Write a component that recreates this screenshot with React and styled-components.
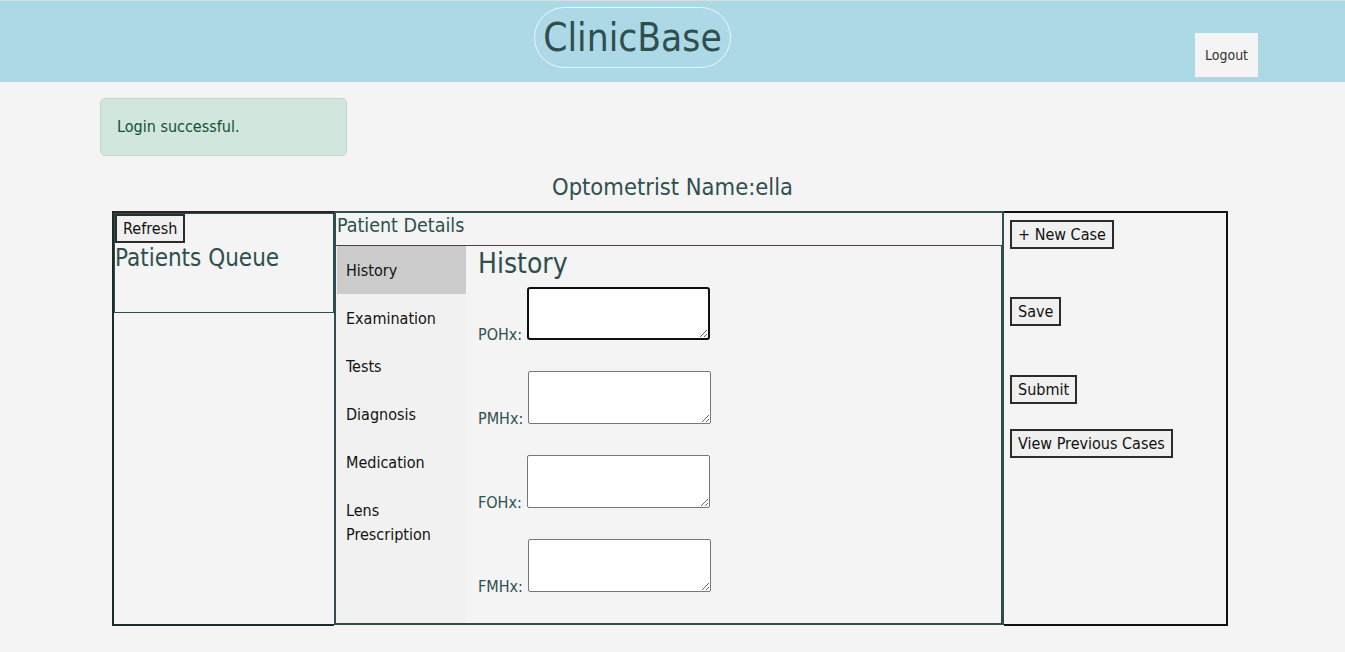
import React from 'react';
import styled, { createGlobalStyle } from 'styled-components';

const GlobalStyle = createGlobalStyle`
  body {
    margin: 0;
    background-color: #f4f4f4;
    font-family: "DejaVu Sans Condensed", "Liberation Sans", sans-serif;
    color: #2f4f4f;
  }
  * {
    box-sizing: border-box;
  }
`;

const Header = styled.header`
  display: grid;
  grid-template-columns: 1fr auto 1fr;
  height: 82px;
  padding-right: 80px;
  background-color: #add8e6;
  border-top: 1px solid #d2dfe3;
`;

const TitlePill = styled.h1`
  grid-column: 2;
  align-self: start;
  margin: 6px 0 0;
  padding: 0 8px;
  height: 61px;
  line-height: 60px;
  font-size: 38.5px;
  font-weight: normal;
  color: #2f4f4f;
  border: 1px solid rgba(255, 255, 255, 0.75);
  border-radius: 31px;
`;

const HeaderRight = styled.div`
  grid-column: 3;
  display: flex;
  justify-content: flex-end;
  align-items: flex-end;
  padding: 0 7px 5px 0;
`;

const LogoutButton = styled.button`
  width: 63px;
  height: 44px;
  border: none;
  background-color: #f4f4f4;
  color: #333;
  font-family: inherit;
  font-size: 14px;
  padding: 0;
`;

const Alert = styled.div`
  width: 247px;
  margin: 16px 0 0 100px;
  padding: 16px;
  line-height: 24px;
  font-size: 16px;
  color: #0f5132;
  background-color: #d1e7dd;
  border: 1px solid #badbcc;
  border-radius: 5px;
`;

const OptometristName = styled.h2`
  margin: 17px 0 10px;
  line-height: 28px;
  font-size: 23.5px;
  font-weight: normal;
  text-align: center;
  color: #2f4f4f;
`;

const Workspace = styled.div`
  display: flex;
  width: 1116px;
  height: 415px;
  margin-left: 112px;
`;

const QueueColumn = styled.div`
  width: 222px;
  border: 2px solid #1b2b2b;
  border-right: none;
`;

const QueueBox = styled.div`
  height: 100px;
  border: 1px solid #2f4f4f;
`;

const PlainButton = styled.button`
  display: block;
  margin: ${(p) => p.$top || 0}px 0 0;
  padding: 3px 6px;
  font-family: inherit;
  font-size: 16px;
  line-height: 19px;
  color: #111;
  background-color: #f0f0f0;
  border: 2px solid #2b2b2b;
  border-radius: 0;
`;

const QueueTitle = styled.h3`
  margin: 0;
  font-size: 24px;
  line-height: 30px;
  font-weight: normal;
  color: #2f4f4f;
`;

const DetailsColumn = styled.div`
  display: flex;
  flex-direction: column;
  width: 670px;
  height: 414px;
  border: 2px solid #2f4f4f;
`;

const DetailsTitle = styled.div`
  height: 33px;
  padding-left: 1px;
  font-size: 19.5px;
  line-height: 26px;
  color: #2f4f4f;
`;

const TabsFrame = styled.div`
  display: flex;
  flex: 1;
  border-top: 1px solid #2f4f4f;
  border-right: 1px solid #2f4f4f;
`;

const TabList = styled.div`
  width: 130px;
  padding-left: 1px;
  background-color: #f1f1f1;
`;

const Tab = styled.div`
  padding: 13px 9px 11px;
  font-size: 16px;
  line-height: 24px;
  color: #111;
  background-color: ${(p) => (p.$active ? '#cccccc' : 'transparent')};
`;

const TabPanel = styled.div`
  flex: 1;
  padding: 0 12px;
  background-color: #f4f4f4;
`;

const PanelTitle = styled.h3`
  margin: 1px 0 6px;
  font-size: 28px;
  line-height: 34px;
  font-weight: normal;
  color: #2f4f4f;
`;

const FieldRow = styled.div`
  display: flex;
  align-items: flex-end;
  gap: 5px;
  margin-bottom: 31px;
`;

const FieldLabel = styled.label`
  font-size: 16px;
  line-height: 10px;
  color: #2f4f4f;
`;

const TextArea = styled.textarea`
  width: 183px;
  height: 53px;
  padding: 2px;
  border: 1px solid #767676;
  border-radius: 2px;
  background-color: #fff;
  &:focus {
    outline: none;
    border: 2px solid #101010;
    border-radius: 3px;
  }
`;

const ActionsColumn = styled.div`
  width: 224px;
  padding: 5px 6px;
  border: 2px solid #111;
  border-left: none;
`;

const tabs = ['History', 'Examination', 'Tests', 'Diagnosis', 'Medication', 'Lens Prescription'];
const fields = ['POHx', 'PMHx', 'FOHx', 'FMHx'];

function App() {
  return (
    <>
      <GlobalStyle />
      <Header>
        <TitlePill>ClinicBase</TitlePill>
        <HeaderRight>
          <LogoutButton>Logout</LogoutButton>
        </HeaderRight>
      </Header>

      <Alert>Login successful.</Alert>

      <OptometristName>Optometrist Name:ella</OptometristName>

      <Workspace>
        <QueueColumn>
          <QueueBox>
            <PlainButton>Refresh</PlainButton>
            <QueueTitle>Patients Queue</QueueTitle>
          </QueueBox>
        </QueueColumn>

        <DetailsColumn>
          <DetailsTitle>Patient Details</DetailsTitle>
          <TabsFrame>
            <TabList>
              {tabs.map((t, i) => (
                <Tab key={t} $active={i === 0}>{t}</Tab>
              ))}
            </TabList>
            <TabPanel>
              <PanelTitle>History</PanelTitle>
              {fields.map((f, i) => (
                <FieldRow key={f}>
                  <FieldLabel htmlFor={f}>{f}:</FieldLabel>
                  <TextArea id={f} autoFocus={i === 0} />
                </FieldRow>
              ))}
            </TabPanel>
          </TabsFrame>
        </DetailsColumn>

        <ActionsColumn>
          <PlainButton $top={2}>+ New Case</PlainButton>
          <PlainButton $top={48}>Save</PlainButton>
          <PlainButton $top={49}>Submit</PlainButton>
          <PlainButton $top={25}>View Previous Cases</PlainButton>
        </ActionsColumn>
      </Workspace>
    </>
  );
}

export default App;
